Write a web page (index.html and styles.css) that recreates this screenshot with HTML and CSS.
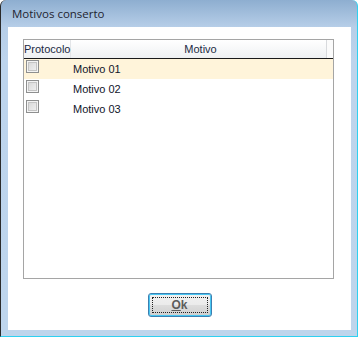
FILE: index.html
```html
<!DOCTYPE html>
<html>
<head>
<meta charset="utf-8">
<link rel="stylesheet" href="styles.css">
</head>
<body>
<div class="window">
  <div class="titlebar">Motivos conserto</div>
  <div class="client">
    <div class="grid">
      <div class="grid-header">
        <div class="hcell col-proto">Protocolo</div>
        <div class="hcell col-motivo">Motivo</div>
        <div class="hfill"></div>
      </div>
      <div class="rows">
        <div class="row selected">
          <div class="cell col-proto"><span class="checkbox"></span></div>
          <div class="cell col-motivo">Motivo 01</div>
        </div>
        <div class="row">
          <div class="cell col-proto"><span class="checkbox"></span></div>
          <div class="cell col-motivo">Motivo 02</div>
        </div>
        <div class="row">
          <div class="cell col-proto"><span class="checkbox"></span></div>
          <div class="cell col-motivo">Motivo 03</div>
        </div>
      </div>
    </div>
    <div class="actions">
      <button class="btn"><span class="focus"><u>O</u>k</span></button>
    </div>
  </div>
</div>
</body>
</html>
```
FILE: styles.css
```css
html, body {
  margin: 0;
  padding: 0;
  background: #ffffff;
}

.window {
  width: 358px;
  height: 337px;
  box-sizing: border-box;
  border-left: 1px solid #2a2a2a;
  border-right: 1px solid #2fd0f0;
  border-bottom: 1px solid #2fd0f0;
  border-radius: 6px 6px 0 0;
  background: linear-gradient(#8eaed0 0px, #b6cee8 27px, #bdd4ec 60px, #bed5ec 100%);
  display: flex;
  flex-direction: column;
  padding: 0 6px 6px 7px;
  font-family: "Liberation Sans", Arial, sans-serif;
}

.titlebar {
  height: 27px;
  box-sizing: border-box;
  padding: 6px 0 0 4px;
  font-family: "Open Sans", "Noto Sans", sans-serif;
  font-size: 11.5px;
  line-height: 16px;
  color: #1f2430;
}

.client {
  flex: 1;
  background: #ffffff;
  display: flex;
  flex-direction: column;
  padding: 12px 17px 0 15px;
}

.grid {
  height: 240px;
  box-sizing: border-box;
  border: 1px solid #a5a5a5;
  background: #fff;
  display: flex;
  flex-direction: column;
}

.grid-header {
  display: flex;
  height: 19px;
  box-sizing: border-box;
  border-bottom: 1px solid #1a1a1a;
  background: linear-gradient(#ffffff, #f7f8f9 50%, #eef0f2);
  font-size: 11px;
  color: #1c2a44;
}

.hcell {
  box-sizing: border-box;
  line-height: 18px;
  white-space: nowrap;
}

.col-proto {
  width: 47px;
  flex: none;
  box-sizing: border-box;
}

.hcell.col-proto {
  border-right: 1px solid #e3e5e8;
  padding-left: 0;
}

.col-motivo {
  width: 256px;
  flex: none;
}

.hcell.col-motivo {
  text-align: center;
  border-right: 1px solid #d8dadd;
  padding-left: 4px;
}

.hfill {
  flex: 1;
  background: #fbfbfb;
}

.rows {
  display: flex;
  flex-direction: column;
}

.row {
  display: flex;
  height: 20px;
  align-items: center;
  font-size: 11px;
  color: #10152a;
}

.row.selected {
  background: #fff4da;
}

.cell.col-proto {
  padding-left: 2px;
  display: flex;
  align-items: flex-start;
  height: 20px;
  padding-top: 1px;
}

.cell.col-motivo {
  padding-left: 2px;
  box-sizing: border-box;
}

.checkbox {
  display: block;
  width: 13px;
  height: 13px;
  box-sizing: border-box;
  border: 1px solid #8e8f8f;
  background: linear-gradient(135deg, #d4d4d4, #f4f4f4);
  box-shadow: inset 0 0 0 1px #f4f4f4, inset 0 0 0 2px #c4c4c4;
}

.actions {
  display: flex;
  justify-content: center;
  padding-top: 14px;
  padding-left: 2px;
}

.btn {
  width: 64px;
  height: 24px;
  box-sizing: border-box;
  border: 1px solid #3c7fb1;
  border-radius: 3px;
  background: linear-gradient(#f2f2f2 0%, #ebebeb 48%, #dddddd 52%, #cfcfcf 100%);
  box-shadow: inset 0 0 0 1px #48c7f2;
  padding: 3px;
  font-family: "Liberation Sans", Arial, sans-serif;
  font-size: 12px;
  font-weight: bold;
  color: #5c5c5c;
  display: flex;
}

.focus {
  flex: 1;
  border: 1px dotted #222;
  display: flex;
  align-items: center;
  justify-content: center;
  line-height: 14px;
}

.focus u {
  text-decoration-color: #5c5c5c;
}
```
